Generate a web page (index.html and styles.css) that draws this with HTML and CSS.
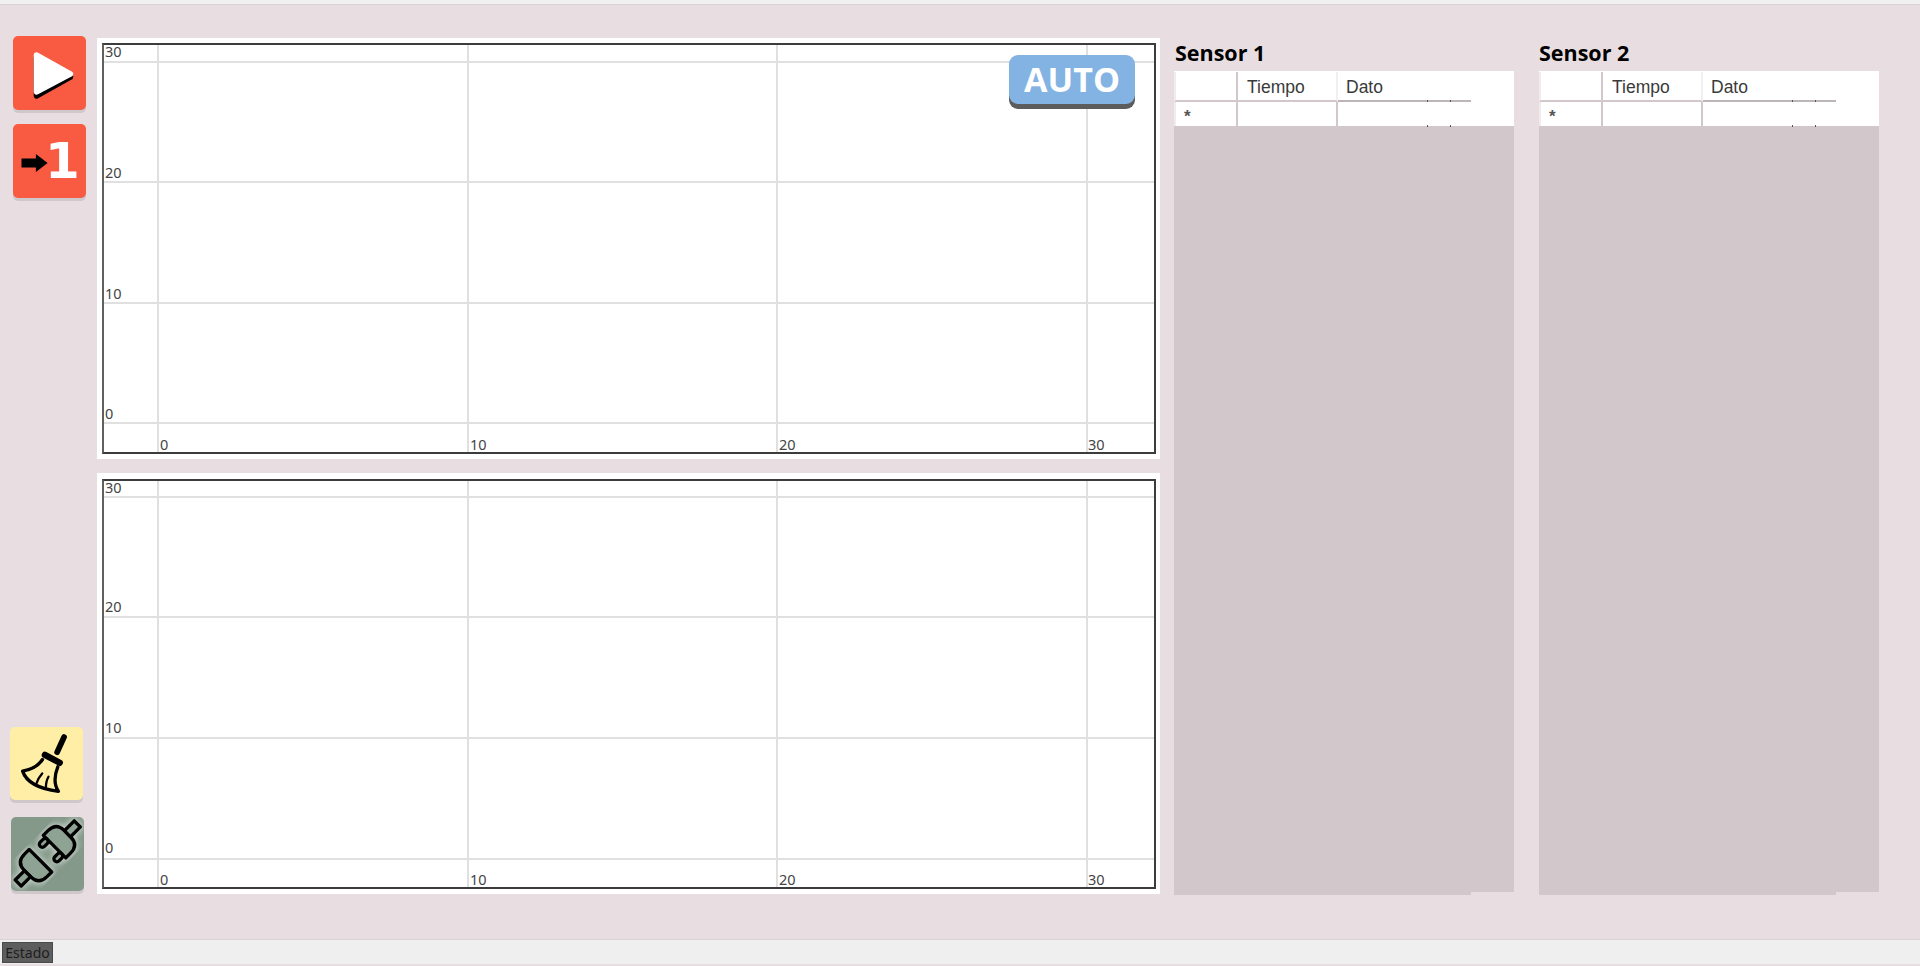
FILE: index.html

```html
<!DOCTYPE html>
<html lang="en">
<head>
  <meta charset="UTF-8">
  <title>Sensores</title>
  <link rel="stylesheet" href="styles.css">
</head>
<body>
<div class="topbar"></div>

<div class="main">
  <div class="tools">
    <div class="tool-group">
      <div class="btn btn-red">
        <svg class="btn-icon" viewBox="0 0 74 74">
          <polygon class="play-shadow" points="24,22 58,41 24,60"/>
          <polygon class="play-face" points="24,19 58,38 24,56"/>
        </svg>
      </div>
      <div class="btn btn-red btn-step">
        <svg class="step-arrow" viewBox="0 0 30 20">
          <polygon points="0,5 16,5 16,0 29,10 16,20 16,15 0,15"/>
        </svg>
        <span class="step-num">1</span>
      </div>
    </div>

    <div class="tool-group tool-group-low">
      <div class="btn btn-yellow">
        <svg class="btn-icon" viewBox="30 52 220 220">
          <path class="broom-handle" d="M193 82 L172 128"/>
          <path class="broom-collar" d="M135 136 L180 160"/>
          <path class="broom-line" d="M128 150 C115 170 95 180 68 185 C78 215 115 238 176 246 C162 225 165 195 174 172"/>
          <path class="broom-line broom-thin" d="M108 226 C112 212 118 202 127 192"/>
          <path class="broom-line broom-thin" d="M138 238 C138 225 140 212 146 202"/>
        </svg>
      </div>
      <div class="btn btn-plug">
        <svg class="btn-icon" viewBox="33 322 220 222">
          <defs>
            <filter id="halo"><feGaussianBlur stdDeviation="9"/></filter>
            <g id="plug">
              <path d="M30 -48 L50 -48 Q85 -48 85 -14 L85 14 Q85 48 50 48 L30 48 Z"/>
              <rect x="85" y="-13" width="42" height="26"/>
              <rect x="0" y="-40" width="30" height="18" rx="9"/>
              <rect x="0" y="22" width="30" height="18" rx="9"/>
              <path d="M-30 -48 L-50 -48 Q-85 -48 -85 -14 L-85 14 Q-85 48 -50 48 L-30 48 Z"/>
              <rect x="-125" y="-13" width="40" height="26"/>
            </g>
          </defs>
          <g transform="translate(143 432) rotate(-45)">
            <use href="#plug" class="plug-halo" filter="url(#halo)"/>
            <use href="#plug" class="plug-line"/>
          </g>
        </svg>
      </div>
    </div>
  </div>

  <div class="charts">
    <div class="chart">
      <div class="plot">
        <svg class="plot-svg" viewBox="0 0 1050 407">
          <rect class="grid" x="53" y="0" width="2" height="407"/>
          <rect class="grid" x="363" y="0" width="2" height="407"/>
          <rect class="grid" x="672" y="0" width="2" height="407"/>
          <rect class="grid" x="982" y="0" width="2" height="407"/>
          <rect class="grid" x="0" y="16" width="1050" height="2"/>
          <rect class="grid" x="0" y="136" width="1050" height="2"/>
          <rect class="grid" x="0" y="257" width="1050" height="2"/>
          <rect class="grid" x="0" y="377" width="1050" height="2"/>
          <text x="1" y="12">30</text>
          <text x="1" y="133">20</text>
          <text x="1" y="254">10</text>
          <text x="1" y="374">0</text>
          <text x="56" y="405">0</text>
          <text x="366" y="405">10</text>
          <text x="675" y="405">20</text>
          <text x="984" y="405">30</text>
        </svg>
      </div>
      <div class="auto-btn">AUTO</div>
    </div>

    <div class="chart chart-low">
      <div class="plot">
        <svg class="plot-svg" viewBox="0 0 1050 406">
          <rect class="grid" x="53" y="0" width="2" height="406"/>
          <rect class="grid" x="363" y="0" width="2" height="406"/>
          <rect class="grid" x="672" y="0" width="2" height="406"/>
          <rect class="grid" x="982" y="0" width="2" height="406"/>
          <rect class="grid" x="0" y="15" width="1050" height="2"/>
          <rect class="grid" x="0" y="135" width="1050" height="2"/>
          <rect class="grid" x="0" y="256" width="1050" height="2"/>
          <rect class="grid" x="0" y="377" width="1050" height="2"/>
          <text x="1" y="12">30</text>
          <text x="1" y="131">20</text>
          <text x="1" y="252">10</text>
          <text x="1" y="372">0</text>
          <text x="56" y="404">0</text>
          <text x="366" y="404">10</text>
          <text x="675" y="404">20</text>
          <text x="984" y="404">30</text>
        </svg>
      </div>
    </div>
  </div>

  <div class="sensor sensor-one">
    <h2 class="sensor-title">Sensor 1</h2>
    <div class="sensor-head">
      <table class="grid-table">
        <tr>
          <th class="c-mark"></th>
          <th class="c-tiempo">Tiempo</th>
          <th class="c-dato">Dato</th>
        </tr>
        <tr>
          <td class="c-mark">*</td>
          <td class="c-tiempo"></td>
          <td class="c-dato"></td>
        </tr>
      </table>
    </div>
    <div class="sensor-fill"></div>
    <div class="sensor-lip"></div>
  </div>

  <div class="sensor sensor-two">
    <h2 class="sensor-title">Sensor 2</h2>
    <div class="sensor-head">
      <table class="grid-table">
        <tr>
          <th class="c-mark"></th>
          <th class="c-tiempo">Tiempo</th>
          <th class="c-dato">Dato</th>
        </tr>
        <tr>
          <td class="c-mark">*</td>
          <td class="c-tiempo"></td>
          <td class="c-dato"></td>
        </tr>
      </table>
    </div>
    <div class="sensor-fill"></div>
    <div class="sensor-lip"></div>
  </div>
</div>

<div class="statusbar">
  <div class="status-label">Estado</div>
</div>
</body>
</html>
```

FILE: styles.css

```css
* {
  box-sizing: border-box;
}

html, body {
  margin: 0;
  padding: 0;
  height: 966px;
  overflow: hidden;
}

body {
  display: flex;
  flex-direction: column;
  background: #e8dee2;
  font-family: "Noto Sans", "Liberation Sans", sans-serif;
}

.topbar {
  height: 5px;
  background: #f0f0f0;
  border-bottom: 1px solid #d9d1d5;
}

.main {
  flex: 1;
  display: flex;
  padding-bottom: 44px;
}

/* botones de la izquierda */
.tools {
  width: 97px;
  padding-top: 31px;
  display: flex;
  flex-direction: column;
  justify-content: space-between;
}

.tool-group {
  display: flex;
  flex-direction: column;
  gap: 14px;
  padding-left: 13px;
}

.tool-group-low {
  gap: 17px;
  padding-left: 10px;
  padding-bottom: 4px;
}

.btn {
  width: 73px;
  height: 74px;
  border-radius: 5px;
  box-shadow: 0 3px 0 #cfc8cb;
}

.btn-icon {
  display: block;
  width: 100%;
  height: 100%;
}

.btn-red {
  background: #f85a42;
}

.btn-step {
  display: flex;
  align-items: center;
  padding-left: 8px;
}

.step-arrow {
  width: 28px;
  height: 18px;
  margin-top: 4px;
  fill: #000;
  flex: none;
}

.step-num {
  font-family: "DejaVu Sans", "Noto Sans", sans-serif;
  font-weight: 700;
  font-size: 50px;
  line-height: 74px;
  color: #fff;
  margin-left: -4px;
}

.play-face {
  fill: #fff;
  stroke: #fff;
  stroke-width: 6;
  stroke-linejoin: round;
}

.play-shadow {
  fill: #000;
  stroke: #000;
  stroke-width: 6;
  stroke-linejoin: round;
}

.btn-yellow {
  background: #ffeea6;
  height: 73px;
}

.broom-handle {
  stroke: #000;
  stroke-width: 17;
  stroke-linecap: round;
  fill: none;
}

.broom-collar {
  stroke: #000;
  stroke-width: 19;
  stroke-linecap: round;
  fill: none;
}

.broom-line {
  stroke: #000;
  stroke-width: 10;
  stroke-linecap: round;
  stroke-linejoin: round;
  fill: none;
}

.broom-thin {
  stroke-width: 7;
}

.btn-plug {
  background: #84998a;
  margin-left: 1px;
}

.plug-halo {
  fill: #b4c2b8;
  stroke: #d4dcd6;
  stroke-width: 14;
}

.plug-line {
  fill: #8fa394;
  stroke: #000;
  stroke-width: 10;
  stroke-linejoin: round;
}

/* graficas */
.charts {
  width: 1063px;
  padding-top: 33px;
  display: flex;
  flex-direction: column;
  gap: 14px;
}

.chart {
  position: relative;
  height: 421px;
  padding: 5px 4px 5px 5px;
  background: #fff;
  display: flex;
}

.chart-low {
  padding-top: 6px;
}

.plot {
  flex: 1;
  border: 2px solid #3c3c3c;
  border-left-color: #606060;
}

.plot-svg {
  display: block;
  width: 100%;
  height: 100%;
  overflow: visible;
}

.plot-svg text {
  font-family: "Noto Sans", sans-serif;
  font-size: 14.5px;
  fill: #444;
}

.grid {
  fill: #e0e0e0;
}

.auto-btn {
  position: absolute;
  top: 17px;
  right: 25px;
  width: 126px;
  height: 49px;
  border-radius: 9px;
  background: #83b3e3;
  box-shadow: 0 5px 0 #5c5c5c;
  color: #fff;
  font-family: "Open Sans", "Noto Sans", sans-serif;
  font-weight: 700;
  font-size: 34px;
  line-height: 49px;
  text-align: center;
}

/* tablas de sensores */
.sensor {
  width: 340px;
  display: flex;
  flex-direction: column;
  padding-top: 34px;
}

.sensor-one {
  margin-left: 14px;
}

.sensor-two {
  margin-left: 25px;
}

.sensor-title {
  margin: 0 0 4px 1px;
  font-family: "Open Sans", "Noto Sans", sans-serif;
  font-weight: 700;
  font-size: 21.5px;
  line-height: 28px;
  color: #000;
}

.sensor-two .sensor-title {
  margin-left: 0;
}

.sensor-head {
  height: 55px;
  padding-top: 1px;
  background: #fff;
}

.grid-table {
  width: 297px;
  table-layout: fixed;
  border-collapse: separate;
  border-spacing: 0;
  font-family: "Liberation Sans", Arial, sans-serif;
  font-size: 17.5px;
  color: #3a3a3a;
}

.grid-table th {
  height: 30px;
  padding: 3px 0 0 8px;
  font-weight: 400;
  text-align: left;
  border-bottom: 2px solid #d2c8cc;
}

.grid-table th.c-tiempo {
  padding-left: 9px;
}

.grid-table td {
  height: 24px;
  padding: 0 0 0 8px;
}

.c-mark {
  width: 64px;
  border-left: 2px solid #f0ecee;
  border-right: 2px solid #d2c8cc;
}

.grid-table td.c-mark {
  padding: 6px 0 0 8px;
  font-weight: 700;
  font-size: 17px;
  line-height: 18px;
  color: #555;
}

.c-tiempo {
  width: 100px;
  border-right: 2px solid #d2c8cc;
}

.grid-table th.c-tiempo {
  border-right-color: #f2eff0;
}

.c-dato {
  position: relative;
}

.grid-table th.c-dato {
  border-bottom-color: #bdb6b9;
}

/* marcas pequeñas de las columnas ocultas */
.c-dato::before,
.c-dato::after {
  content: "";
  position: absolute;
  bottom: -2px;
  width: 1px;
  height: 2px;
  background: #555;
}

.c-dato::before {
  left: 89px;
}

.c-dato::after {
  left: 112px;
}

.grid-table td.c-dato::before,
.grid-table td.c-dato::after {
  bottom: -1px;
}

.sensor-fill {
  flex: 1;
  background: #d2c8cc;
}

.sensor-lip {
  width: 297px;
  height: 3px;
  background: #d2c8cc;
}

/* barra de estado */
.statusbar {
  height: 25px;
  margin-bottom: 2px;
  padding: 2px 0 1px 2px;
  background: #efefef;
  border-top: 1px solid #d9d1d5;
}

.status-label {
  width: 51px;
  height: 21px;
  background: #5d5d5d;
  border: 1px solid #4a4a4a;
  color: #1e1e1e;
  font-size: 14px;
  line-height: 19px;
  text-align: center;
}
```
